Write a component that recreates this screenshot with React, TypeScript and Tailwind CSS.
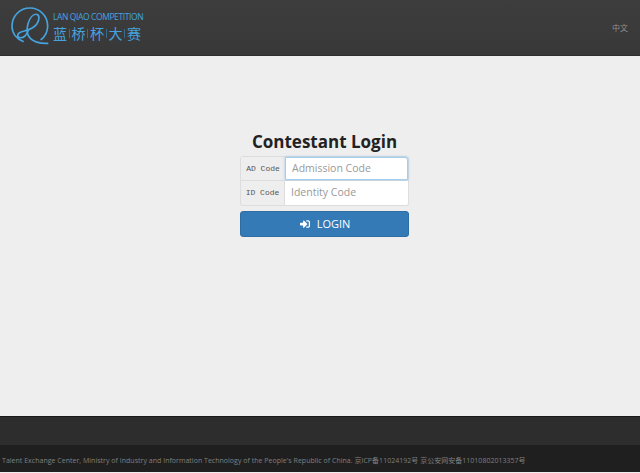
import { FaSignInAlt } from "react-icons/fa";

const Logo = () => (
  <svg width="50" height="50" viewBox="0 0 150 150" fill="none" stroke="#45a3e0" strokeWidth="5" className="shrink-0">
    <path d="M56 116 C34 108 21 90 21 69 C21 39 45 15 75 15 C104 15 128 39 128 69 C128 86 120 101 107 111" />
    <path d="M95 34 C84 32 74 46 69 62 C64 80 66 96 76 106 C86 116 108 122 130 121" />
    <path d="M95 34 C104 36 104 50 96 62 C88 74 72 80 58 84 C46 87 37 90 38 98 C39 106 52 106 60 99 C65 94 68 88 70 82" />
  </svg>
);

const App = () => {
  return (
    <main className="w-full h-[473px] flex flex-col bg-[#eeeeee] font-['Open_Sans','Noto_Sans_CJK_SC',sans-serif] overflow-hidden">
      <header className="h-[56px] shrink-0 bg-gradient-to-b from-[#3d3d3d] to-[#383838] border-b border-[#2e2e2e] flex items-center justify-between pl-[5px] pr-[12px]">
        <div className="flex items-center">
          <Logo />
          <div className="text-[#45a3e0] -ml-[2px] -mt-[1px]">
            <div className="text-[8.5px] leading-[11px] tracking-[-0.4px]">LAN QIAO COMPETITION</div>
            <div className="text-[14px] leading-[20px] mt-[1px] flex items-center gap-[1.75px] font-['Noto_Sans_CJK_SC',sans-serif]">
              <span>蓝</span>
              <span className="w-px h-[9px] bg-[#3a6a8a]"></span>
              <span>桥</span>
              <span className="w-px h-[9px] bg-[#3a6a8a]"></span>
              <span>杯</span>
              <span className="w-px h-[9px] bg-[#3a6a8a]"></span>
              <span>大</span>
              <span className="w-px h-[9px] bg-[#3a6a8a]"></span>
              <span>赛</span>
            </div>
          </div>
        </div>
        <a className="text-[8px] text-[#8f8f8f] font-['Noto_Sans_CJK_SC',sans-serif]">中文</a>
      </header>

      <section className="flex-1 flex flex-col items-center pt-[73px] pl-[9px]">
        <h1 className="text-[17px] leading-[26px] font-bold text-[#222222]">Contestant Login</h1>
        <div className="w-[169px] mt-[1px]">
          <div className="flex h-[25px] rounded-t-[3px] border border-[#dddddd]">
            <span className="w-[44px] shrink-0 bg-[#eeeeee] flex items-center justify-center text-[8px] text-[#555555] font-['Liberation_Mono',monospace]">AD Code</span>
            <input
              placeholder="Admission Code"
              className="w-full min-w-0 bg-white px-[6px] text-[10.5px] outline-none placeholder:text-[#999999] shadow-[0_0_3px_rgba(102,175,233,0.6)] border border-[#a5cdec] rounded-tr-[3px]"
            />
          </div>
          <div className="flex h-[25px] rounded-b-[3px] border border-t-0 border-[#dddddd] overflow-hidden">
            <span className="w-[44px] shrink-0 bg-[#eeeeee] border-r border-[#dddddd] flex items-center justify-center text-[8px] text-[#555555] font-['Liberation_Mono',monospace]">ID Code</span>
            <input
              placeholder="Identity Code"
              className="w-full min-w-0 bg-white px-[6px] text-[10.5px] outline-none placeholder:text-[#999999]"
            />
          </div>
          <button className="w-full h-[26px] mt-[5px] rounded-[3px] bg-[#337ab7] border border-[#2e6da4] text-white text-[11px] flex items-center justify-center gap-[7px] pl-[1px]">
            <FaSignInAlt size={10} />
            LOGIN
          </button>
        </div>
      </section>

      <footer className="shrink-0 pb-[1px]">
        <div className="h-[29px] bg-[#2d2d2d] border-t border-[#1a1a1a]"></div>
        <div className="h-[27px] bg-[#1f1f1f] flex items-center pt-[6px] pl-[2px] text-[7px] tracking-[0.02px] text-[#7f7f7f] whitespace-nowrap">
          Talent Exchange Center, Ministry of Industry and Information Technology of the People's Republic of China. 京ICP备11024192号 京公安网安备11010802013357号
        </div>
      </footer>
    </main>
  );
};

export default App;
